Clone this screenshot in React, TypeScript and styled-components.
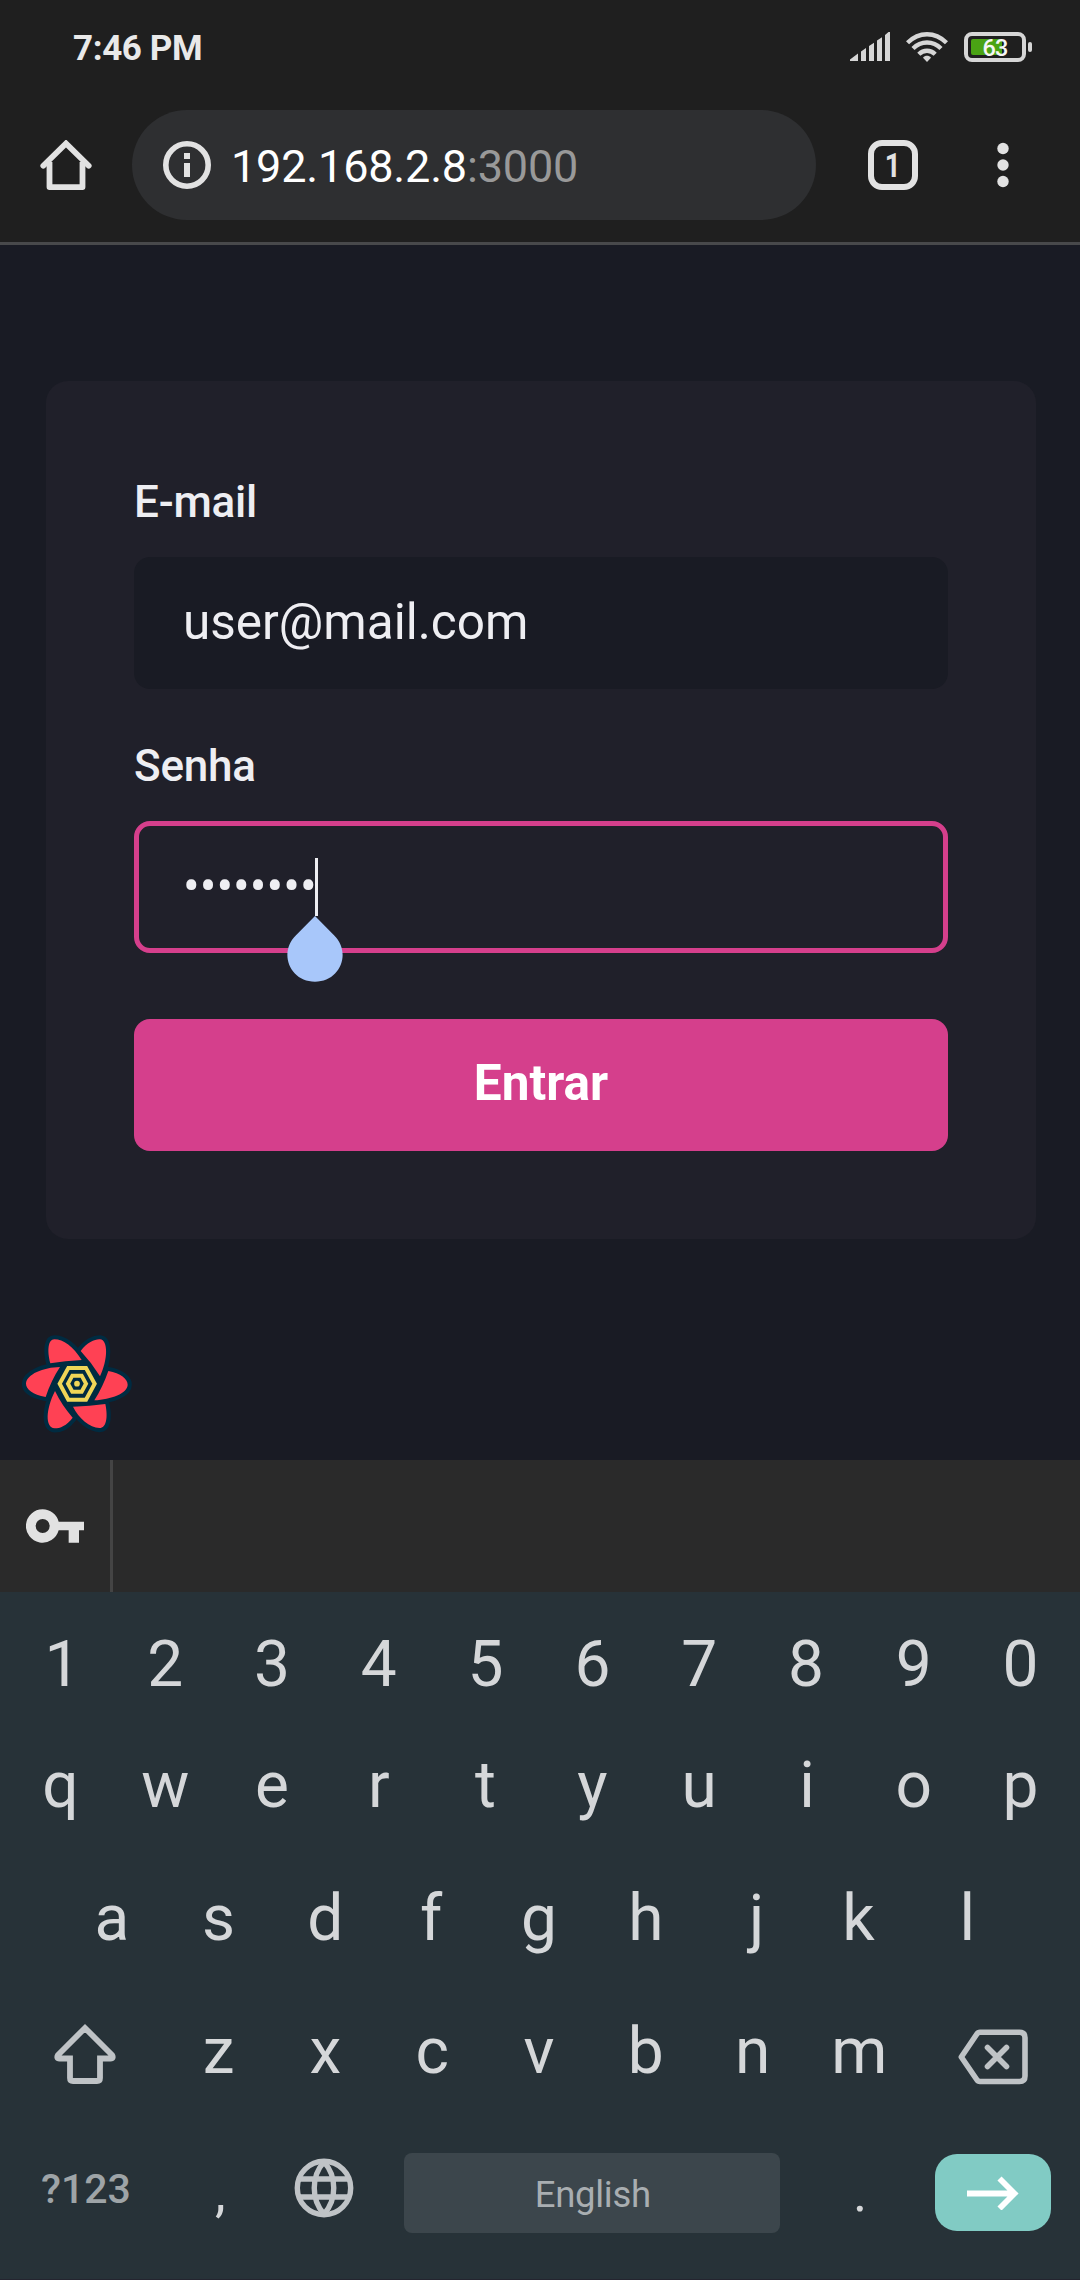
import React from "react";
import styled, { createGlobalStyle, css } from "styled-components";

const GlobalStyle = createGlobalStyle`
  * { box-sizing: border-box; }
  body { margin: 0; background: #191b24; }
  svg { display: block; flex: none; }
`;

const Screen = styled.div`
  width: 1080px;
  height: 2280px;
  display: flex;
  flex-direction: column;
  overflow: hidden;
  background: #191b24;
  font-family: Roboto, "Liberation Sans", sans-serif;
`;

/* ---------- system status bar ---------- */

const StatusBar = styled.header`
  height: 88px;
  padding: 8px 48px 0 73px;
  display: flex;
  align-items: center;
  justify-content: space-between;
  background: #1f1f1f;
`;

const Clock = styled.span`
  padding-top: 2px;
  color: #e9e9e9;
  font-size: 35px;
  font-weight: 700;
  line-height: 40px;
  letter-spacing: -0.4px;
`;

const StatusIcons = styled.div`
  display: flex;
  align-items: center;
  gap: 16px;
  height: 30px;
  margin-bottom: 2px;
`;

const Battery = styled.div`
  position: relative;
  width: 68px;
  height: 30px;
`;

const BatteryLevel = styled.span`
  position: absolute;
  left: 0;
  top: 3px;
  width: 62px;
  text-align: center;
  color: #f6f6f6;
  font-size: 23.5px;
  font-weight: 500;
  line-height: 27px;
  letter-spacing: -0.8px;
`;

/* ---------- browser toolbar ---------- */

const Toolbar = styled.nav`
  height: 157px;
  padding-left: 40px;
  display: flex;
  align-items: center;
  background: #1f1f1f;
  border-bottom: 3px solid #48494b;
`;

const AddressBar = styled.div`
  width: 684px;
  height: 110px;
  margin-left: 40px;
  padding-left: 31px;
  display: flex;
  align-items: center;
  gap: 20px;
  border-radius: 55px;
  background: #2e2f31;
`;

const Url = styled.span`
  color: #fff;
  font-size: 45px;
  line-height: 54px;
  letter-spacing: -0.18px;
  padding-top: 3px;
`;

const Port = styled.span`
  color: #999;
`;

const TabCount = styled.div`
  width: 50px;
  height: 50px;
  margin: 0 79px 0 52px;
  display: flex;
  align-items: center;
  justify-content: center;
  border: 6px solid #e2e2e2;
  border-radius: 14px;
  color: #e2e2e2;
  font-size: 34px;
  font-weight: 700;
  line-height: 38px;
`;

const TabNumber = styled.span`
  display: block;
  transform: scaleX(0.82);
`;

/* ---------- login page ---------- */

const Page = styled.main`
  position: relative;
  height: 1215px;
  padding: 136px 44px 0 46px;
`;

const Card = styled.div`
  height: 858px;
  padding: 88px;
  display: flex;
  flex-direction: column;
  border-radius: 22px;
  background: #20202a;
`;

const Label = styled.label`
  height: 66px;
  margin-bottom: 22px;
  color: #eeeef2;
  font-size: 44px;
  font-weight: 500;
  line-height: 66px;
  letter-spacing: -0.2px;
`;

const Field = styled.div<{ $focused?: boolean }>`
  position: relative;
  height: 132px;
  margin-bottom: ${(p) => (p.$focused ? 66 : 44)}px;
  padding: 0 0 2px ${(p) => (p.$focused ? 44 : 49)}px;
  display: flex;
  align-items: center;
  border-radius: 16px;
  color: #eeeef2;
  font-size: 49.5px;
  line-height: 60px;
  background: #191b24;
  ${(p) =>
    p.$focused &&
    css`
      background: #20202a;
      border: 5px solid #d53f8c;
    `}
`;

const Caret = styled.i`
  width: 3px;
  height: 58px;
  margin: 2px 0 0 -2px;
  background: #eeeef2;
`;

const Handle = styled.svg`
  position: absolute;
  left: 148px;
  top: 90px;
`;

const Submit = styled.button`
  height: 132px;
  border: 0;
  padding: 0 0 4px;
  border-radius: 16px;
  background: #d53f8c;
  color: #fff;
  font-family: inherit;
  font-size: 49.5px;
  font-weight: 700;
  line-height: 60px;
`;

const QueryBadge = styled.svg`
  position: absolute;
  left: 20px;
  top: 1088px;
`;

/* ---------- autofill strip and keyboard ---------- */

const Autofill = styled.div`
  height: 132px;
  display: flex;
  background: #2a2a2a;
`;

const KeySlot = styled.div`
  width: 113px;
  padding-left: 26px;
  display: flex;
  align-items: center;
  border-right: 3px solid #444;
`;

const Keyboard = styled.section`
  height: 688px;
  padding: 18px 7px 0 5px;
  display: flex;
  flex-direction: column;
  background: #273238;
  border-bottom: 1px solid #24242f;
`;

const Row = styled.div<{ $height: number; $inset?: number }>`
  height: ${(p) => p.$height}px;
  padding: 0 ${(p) => p.$inset ?? 0}px;
  display: flex;
  align-items: center;
`;

const Key = styled.div<{ $nudge?: number }>`
  width: 106.8px;
  flex: none;
  text-align: center;
  text-indent: ${(p) => (p.$nudge ?? 0) * 2}px;
  color: #d5d7d9;
  font-size: 64px;
  line-height: 76px;
`;

const WideKey = styled.div<{ $drop: number }>`
  width: 160.2px;
  flex: none;
  padding-top: ${(p) => p.$drop}px;
  display: flex;
  justify-content: center;
`;

const SymbolsKey = styled.div`
  width: 161px;
  padding-left: 36px;
  margin-top: -9px;
  color: #9ea4a7;
  font-size: 41px;
  font-weight: 500;
  line-height: 50px;
`;

const Punctuation = styled(Key)`
  font-size: 54px;
`;

const GlobeKey = styled.div`
  width: 106px;
  margin-top: -11px;
  padding-right: 3px;
  display: flex;
  justify-content: center;
`;

const SpaceKey = styled.div`
  width: 376px;
  height: 80px;
  margin: 0 26px 0 25px;
  display: flex;
  align-items: center;
  justify-content: center;
  border-radius: 8px;
  background: #3c464c;
  color: #a9aeb1;
  font-size: 36.5px;
  line-height: 44px;
  letter-spacing: -0.3px;
  padding: 4px 0 0 2px;
`;

const EnterKey = styled.div`
  width: 116px;
  height: 77px;
  margin: -1px 0 0 22px;
  display: flex;
  align-items: center;
  justify-content: center;
  border-radius: 22px;
  background: #81cbc4;
`;

const SignalIcon = () => (
  <svg width="40" height="30" fill="#d6d6d6">
    <path d="M0 29v-1.5L8 21.5V29zM11 29V19.5L16 16v13zM19 29V14L24 10.7V29zM27 29V8.500L32 5.300V29zM35 29V3L38.500 0H40v29z" />
  </svg>
);

const WifiIcon = () => (
  <svg width="42" height="30" fill="none" stroke="#d6d6d6" strokeWidth="4.400">
    <path d="M1.500 10.800C13-.6 29-.6 40.500 10.800" />
    <path d="M7 16.500C15 8.500 27 8.500 35 16.500" />
    <path d="M12.800 22.300c4.800-4.700 11.600-4.700 16.400 0" />
    <path d="M21 30l-4-4.200c2-2.600 6-2.600 8 0z" fill="#d6d6d6" stroke="none" />
  </svg>
);

const HomeIcon = () => (
  <svg width="52" height="50" viewBox="40 140 52 50" fill="none" stroke="#e2e2e2" strokeWidth="5.800">
    <path d="M43.300 165.700L66 143.500l22.700 22.200" strokeLinecap="round" />
    <path d="M49.500 162v25.100h33V162" strokeLinejoin="round" />
  </svg>
);

const InfoIcon = () => (
  <svg width="48" height="48" fill="none">
    <circle cx="24" cy="24" r="21.200" stroke="#e2e2e2" strokeWidth="5.600" />
    <path d="M24 12v6M24 22v14" stroke="#e2e2e2" strokeWidth="6" />
  </svg>
);

const MenuIcon = () => (
  <svg width="12" height="46" fill="#e2e2e2">
    <circle cx="6" cy="6.500" r="5.700" />
    <circle cx="6" cy="23" r="5.700" />
    <circle cx="6" cy="39.500" r="5.700" />
  </svg>
);

const petals = [
  "M151 160C141 122 144 88 163 88C190 88 220 110 245 150Q195 153 151 160Z",
  "M242 123C262 97 285 87 300 88C325 90 324 150 300 199Q275 158 242 123Z",
  "M325 183C362 190 383 207 383 224C383 250 333 268 283 271Q308 232 325 183Z",
  "M219 290Q270 289 316 282C325 325 318 355 298 354C270 353 236 325 219 290Z",
  "M165 243Q185 285 218 323C200 347 180 355 164 355C135 353 137 298 165 243Z",
  "M180 171Q153 212 137 261C98 253 78 238 78 221C79 193 130 172 180 171Z",
];

const QueryLogo = () => (
  <QueryBadge width="114" height="102" viewBox="60 69 342 306">
    <g fill="#002b41" stroke="#002b41" strokeWidth="25" strokeLinejoin="round">
      {petals.map((d) => (
        <path key={d} d={d} />
      ))}
      <path d="M200 170h62l29 51-29 52h-62l-28-52z" />
    </g>
    <g fill="#ff4154">
      {petals.map((d) => (
        <path key={d} d={d} />
      ))}
    </g>
    <g fill="none" stroke="#efd657" strokeWidth="12">
      <path d="M205 174h53l26 47-26 48h-53l-26-48z" />
      <path d="M217 197h28l13 24-13 24h-28l-13-24z" />
    </g>
    <circle cx="231" cy="221" r="8.500" fill="#efd657" />
  </QueryBadge>
);

const PasswordKeyIcon = () => (
  <svg width="58" height="34" viewBox="78 597 174 102" fill="#e2e2e2">
    <path
      fillRule="evenodd"
      d="M128 598a50 50 0 0 1 48 37h76v26h-15v37h-31v-37h-30A50 50 0 1 1 128 598zM128 627a21 21 0 1 0 0 42a21 21 0 1 0 0-42z"
    />
  </svg>
);

const ShiftIcon = () => (
  <svg width="62" height="62" fill="none" stroke="#bfc3c6" strokeWidth="5.800">
    <path d="M31 5L58 32q2 3.500-1.500 3.500H46V55q0 3-3 3H19q-3 0-3-3V35.500H5.500Q2 35.500 4 32z" />
  </svg>
);

const BackspaceIcon = () => (
  <svg width="70" height="56" fill="none" stroke="#bfc3c6" strokeWidth="5.600" strokeLinejoin="round">
    <path d="M22 3.300h39.500q5.500 0 5.500 5.500V47q0 5.500-5.500 5.500H22q-2 0-3.300-2L3.300 28 18.700 5.300q1.300-2 3.300-2z" />
    <path d="M29.500 18.500L48.500 37.500M48.500 18.500L29.500 37.500" strokeLinecap="round" />
  </svg>
);

const GlobeIcon = () => (
  <svg width="60" height="60" fill="none" stroke="#bfc3c6" strokeWidth="5.400">
    <circle cx="30" cy="30" r="26.700" />
    <path d="M6 21h48M6 39h48M30 4C17 18 17 42 30 56M30 4c13 14 13 38 0 52" />
  </svg>
);

const ArrowIcon = () => (
  <svg width="54" height="34" fill="none" stroke="#fff" strokeWidth="5.800">
    <path d="M1 17.500h47M33.500 2.500L48.500 17.500L33.500 32.500" />
  </svg>
);

const nudges: Record<string, number> = { "1": 4, q: 2, f: -1, k: -1, j: 4, l: 1, i: 1, "9": 1, "0": 1, p: 1, o: 1 };

const renderKeys = (letters: string) =>
  [...letters].map((c) => (
    <Key key={c} $nudge={nudges[c]}>
      {c}
    </Key>
  ));

export default function App() {
  return (
    <>
      <GlobalStyle />
      <Screen>
        <StatusBar>
          <Clock>7:46 PM</Clock>
          <StatusIcons>
            <SignalIcon />
            <WifiIcon />
            <Battery>
              <svg width="68" height="30">
                <rect x="2" y="2" width="58" height="26" rx="6" fill="none" stroke="#d6d6d6" strokeWidth="4" />
                <rect x="7" y="7" width="31" height="16" rx="2" fill="#4aa314" />
                <rect x="64" y="10" width="4" height="10" rx="2" fill="#d6d6d6" />
              </svg>
              <BatteryLevel>63</BatteryLevel>
            </Battery>
          </StatusIcons>
        </StatusBar>

        <Toolbar>
          <HomeIcon />
          <AddressBar>
            <InfoIcon />
            <Url>
              192.168.2.8<Port>:3000</Port>
            </Url>
          </AddressBar>
          <TabCount>
            <TabNumber>1</TabNumber>
          </TabCount>
          <MenuIcon />
        </Toolbar>

        <Page>
          <Card>
            <Label>E-mail</Label>
            <Field>user@mail.com</Field>
            <Label>Senha</Label>
            <Field $focused>
              ••••••••
              <Caret />
              <Handle width="56" height="67">
                <path d="M28 0L47 19.200C65 37 53 65.700 28 65.700S-9 37 9 19.200z" fill="#a8c7fa" />
              </Handle>
            </Field>
            <Submit>Entrar</Submit>
          </Card>
          <QueryLogo />
        </Page>

        <Autofill>
          <KeySlot>
            <PasswordKeyIcon />
          </KeySlot>
        </Autofill>

        <Keyboard>
          <Row $height={109}>{renderKeys("1234567890")}</Row>
          <Row $height={133}>{renderKeys("qwertyuiop")}</Row>
          <Row $height={133} $inset={53.4}>
            {renderKeys("asdfghjkl")}
          </Row>
          <Row $height={133}>
            <WideKey $drop={4}>
              <ShiftIcon />
            </WideKey>
            {renderKeys("zxcvbnm")}
            <WideKey $drop={11}>
              <BackspaceIcon />
            </WideKey>
          </Row>
          <Row $height={150}>
            <SymbolsKey>?123</SymbolsKey>
            <Punctuation $nudge={1}>,</Punctuation>
            <GlobeKey>
              <GlobeIcon />
            </GlobeKey>
            <SpaceKey>English</SpaceKey>
            <Punctuation $nudge={1}>.</Punctuation>
            <EnterKey>
              <ArrowIcon />
            </EnterKey>
          </Row>
        </Keyboard>
      </Screen>
    </>
  );
}
